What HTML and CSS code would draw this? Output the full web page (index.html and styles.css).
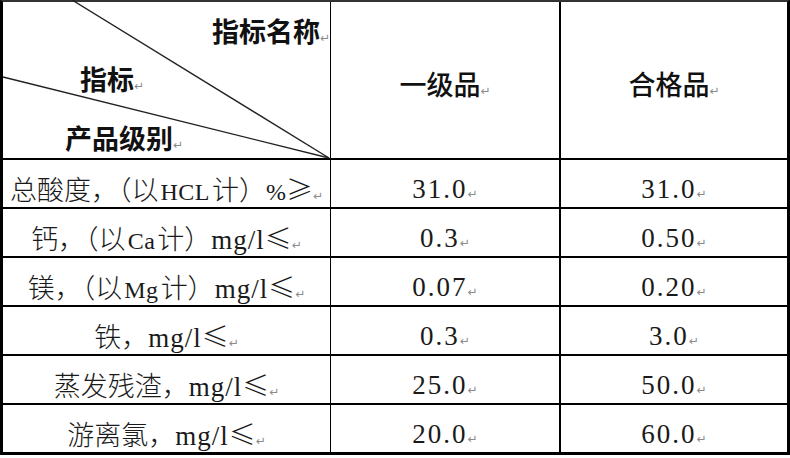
FILE: index.html
```html
<!DOCTYPE html>
<html lang="zh-CN">
  <head>
    <meta charset="UTF-8" />
    <meta name="viewport" content="width=device-width, initial-scale=1.0" />
    <title>盐酸质量指标</title>
    <link rel="stylesheet" href="styles.css">
  </head>
  <body>
    <div class="sheet">
      <div class="cell head-diag">
        <svg class="diag" width="328" height="156" viewBox="0 0 328 156">
          <line x1="69" y1="-2" x2="326" y2="156" />
          <line x1="0" y1="75" x2="326" y2="156" />
        </svg>
        <p class="d-name">指标名称<span class="pm">↵</span></p>
        <p class="d-mid">指标<span class="pm">↵</span></p>
        <p class="d-low">产品级别<span class="pm">↵</span></p>
      </div>
      <div class="cell head">一级品<span class="pm">↵</span></div>
      <div class="cell head">合格品<span class="pm">↵</span></div>

      <div class="cell">总酸度，（以<span class="lat gap">HCL</span>计）<span class="lat pct">%</span><span class="sym">≥</span><span class="pm">↵</span></div>
      <div class="cell num">31.0<span class="pm">↵</span></div>
      <div class="cell num">31.0<span class="pm">↵</span></div>

      <div class="cell">钙，（以<span class="lat gap">Ca</span>计）<span class="lat">mg/l</span><span class="sym">≤</span><span class="pm">↵</span></div>
      <div class="cell num">0.3<span class="pm">↵</span></div>
      <div class="cell num">0.50<span class="pm">↵</span></div>

      <div class="cell">镁，（以<span class="lat gap">Mg</span>计）<span class="lat">mg/l</span><span class="sym">≤</span><span class="pm">↵</span></div>
      <div class="cell num">0.07<span class="pm">↵</span></div>
      <div class="cell num">0.20<span class="pm">↵</span></div>

      <div class="cell">铁，<span class="lat">mg/l</span><span class="sym">≤</span><span class="pm">↵</span></div>
      <div class="cell num">0.3<span class="pm">↵</span></div>
      <div class="cell num">3.0<span class="pm">↵</span></div>

      <div class="cell">蒸发残渣，<span class="lat">mg/l</span><span class="sym">≤</span><span class="pm">↵</span></div>
      <div class="cell num">25.0<span class="pm">↵</span></div>
      <div class="cell num">50.0<span class="pm">↵</span></div>

      <div class="cell">游离氯，<span class="lat">mg/l</span><span class="sym">≤</span><span class="pm">↵</span></div>
      <div class="cell num">20.0<span class="pm">↵</span></div>
      <div class="cell num">60.0<span class="pm">↵</span></div>
    </div>
  </body>
</html>
```

FILE: styles.css
```css
* {
  margin: 0;
  padding: 0;
  box-sizing: border-box;
}

body {
  background: #fff;
  color: #1a1a1a;
}

.sheet {
  display: grid;
  grid-template-columns: 328px 230px 226px;
  grid-template-rows: 158px repeat(5, 49px) 47px;
  width: 790px;
  border-top: 2px solid #333;
  border-left: 3px solid #000;
  border-right: 3px solid #000;
  border-bottom: 3px solid #000;
}

.cell {
  border-bottom: 2px solid #000;
  text-align: center;
  padding-top: 11px;
  line-height: 36px;
  font-family: "Liberation Serif", "Noto Sans CJK SC", serif;
  font-size: 27px;
  font-weight: 300;
  white-space: nowrap;
}

.cell:nth-child(3n + 1) {
  border-right: 1px solid #000;
}

.cell:nth-child(3n + 2) {
  border-right: 2px solid #000;
}

.cell:nth-last-child(-n + 3) {
  border-bottom: none;
}

.num {
  letter-spacing: 2px;
}

.lat {
  letter-spacing: 1px;
}

.gap {
  font-size: 24px;
  letter-spacing: 0.5px;
  margin: 0 2px;
}

.pct {
  font-size: 24px;
  letter-spacing: 0;
}

.sym {
  font-family: "Noto Sans CJK SC", sans-serif;
}

.pm {
  font-family: "DejaVu Sans", sans-serif;
  font-size: 12px;
  font-weight: normal;
  line-height: 0;
  letter-spacing: 0;
  color: #8a8a8a;
}

.head {
  padding-top: 68px;
  line-height: 28px;
  font-family: "Noto Sans CJK SC", sans-serif;
  font-size: 27px;
  font-weight: 500;
  color: #111;
}

.head-diag {
  position: relative;
  padding-top: 0;
  text-align: left;
  font-family: "Noto Sans CJK SC", sans-serif;
  font-size: 27px;
  font-weight: 700;
  line-height: 27px;
  color: #111;
}

.diag {
  position: absolute;
  left: 0;
  top: 0;
  overflow: visible;
}

.diag line {
  stroke: #222;
  stroke-width: 1.4;
}

.d-name {
  margin-top: 15px;
  text-align: right;
}

.d-mid {
  margin-top: 21px;
  padding-left: 77px;
}

.d-low {
  margin-top: 32px;
  padding-left: 62px;
}
```
